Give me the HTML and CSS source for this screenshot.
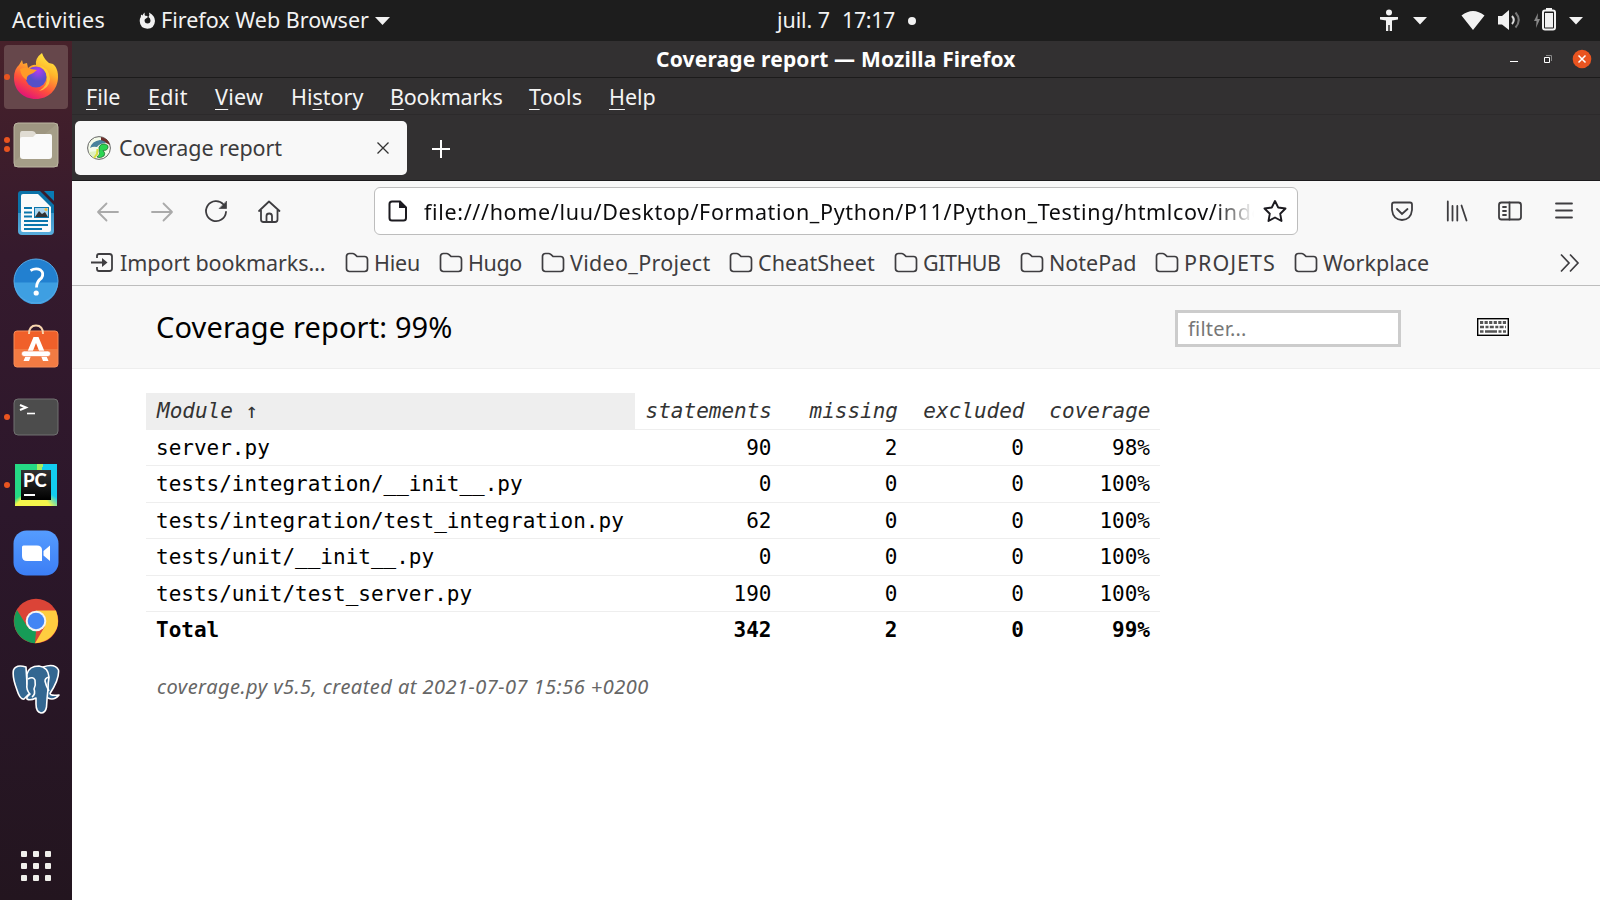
FILE: index.html
```html
<!DOCTYPE html>
<html lang="en">
<head>
<meta charset="utf-8">
<title>Coverage report</title>
<link rel="stylesheet" href="styles.css">
</head>
<body>
<svg class="defs" width="0" height="0">
  <symbol id="folder" viewBox="0 0 24 22"><path d="M1.5 4.500Q1.500 1.500 4.500 1.500H7.500Q8.800 1.500 9.800 2.500L12 4.500H19.500Q22.500 4.500 22.500 7.500V16.500Q22.500 19.500 19.500 19.500H4.500Q1.500 19.500 1.500 16.500Z" fill="none" stroke="#3e3d40" stroke-width="1.700"/></symbol>
</svg>
<header class="topbar">
  <span class="activities">Activities</span>
  <svg class="fxmini" width="17" height="18" viewBox="0 0 17 18"><path d="M6 .5Q5 2 6 3.800Q8 3.300 9 5L7 6.600Q5.500 7 5.500 9Q6 11.500 8.500 11.500Q11.500 11.300 11.500 8.500Q11.500 6 9.500 5Q11 3 10 .5Q16 3.500 16 9Q15.500 16.500 8.300 16.700Q1 16.300 .7 9Q.6 6.500 1.800 5L2 2.500L3.500 3.500Q4 1.500 6 .5Z" fill="#f2f2f2"/></svg>
  <span class="app">Firefox Web Browser</span>
  <svg class="caret c1" width="15" height="8"><path d="M0 0H15L7.500 8Z"/></svg>
  <span class="date">juil. 7</span><span class="time">17:17</span><i class="notif"></i>
  <svg class="status" width="210" height="41" viewBox="1380 0 210 41" fill="#f2f2f2"><circle cx="1389" cy="12.500" r="3"/><path d="M1380 17H1398V19.500L1392 20.500V31H1389.700V25H1388.300V31H1386V20.500L1380 19.500ZM1413 17H1427L1420 24.500ZM1461.500 15.500Q1473 6.500 1484.500 15.500L1473 30ZM1498 16H1502L1509 10V30L1502 24.500H1498ZM1569 17H1583L1576 24.500Z"/><path d="M1512 16Q1515.500 20 1512 24" fill="none" stroke="#ddd" stroke-width="2"/><path d="M1515.500 12.500Q1522 20 1515.500 27.500" fill="none" stroke="#777" stroke-width="2"/><path d="M1538 13L1534 21H1536.500L1536 28L1540 19H1537.500Z" fill="#888"/><rect x="1543" y="10.500" width="12" height="19" rx="2" fill="none" stroke="#f2f2f2" stroke-width="2"/><path d="M1546 8H1552V10H1546ZM1545 13H1553V27.500H1545Z"/></svg>
</header>
<div class="desk">
<nav class="dock">
  <div class="slot s-fx on"><svg width="46" height="48" viewBox="0 0 46 48"><defs><linearGradient id="ff" x1=".8" y1="0" x2=".3" y2="1"><stop offset="0" stop-color="#fff044"/><stop offset=".35" stop-color="#ffb52b"/><stop offset=".7" stop-color="#ff4f3c"/><stop offset="1" stop-color="#e0107b"/></linearGradient><radialGradient id="fp" cx=".6" cy=".2"><stop offset="0" stop-color="#b43bf0"/><stop offset="1" stop-color="#5650c8"/></radialGradient></defs><path d="M9 8L10 12L14 11L15 16Q20 12 23 13Q22 6 29 1Q31 7 36 11L40 12L42 14Q45 18 45 25C45 38 35 47 23 47C10 47 1 38 1 26Q1 17 6 13Z" fill="url(#ff)"/><circle cx="23" cy="25" r="10.500" fill="url(#fp)"/><path d="M7 17Q13 14 18 17L24 18Q20 22 16 23Q13 25 14 28Q8 25 7 17Z" fill="#ff9b27"/><path d="M25 13Q36 15 37 27Q36 37 26 39Q35 34 34 25Q33 17 25 13Z" fill="#ffd23a" opacity=".8"/></svg></div>
  <div class="slot s-files two"><svg width="46" height="46" viewBox="0 0 46 46"><rect x="1" y="1" width="44" height="44" rx="4" fill="#9e9681"/><path d="M20 22L45 1V45H1V40Z" fill="#aaa38d" opacity=".6"/><rect x="1" y="1" width="44" height="44" rx="4" fill="none" stroke="#bcb6a2"/><path d="M7 12Q7 9 9 9H19Q22 9 23 12V18H7Z" fill="#e0dcd3"/><path d="M7 17Q7 15 9 15H20L23 12H37Q39 12 39 14V34Q39 37 36 37H10Q7 37 7 34Z" fill="#fafafa"/></svg></div>
  <div class="slot s-writer"><svg width="38" height="46" viewBox="0 0 38 46"><defs><linearGradient id="wr" x2="0" y2="1"><stop offset=".5" stop-color="#0b72a8"/><stop offset=".5" stop-color="#3a95c8"/><stop offset="1" stop-color="#58addd"/></linearGradient></defs><path d="M4 1H23L37 15V41Q37 45 33 45H5Q1 45 1 41V4Q1 1 4 1Z" fill="url(#wr)"/><path d="M4 6Q4 4 6 4H21L34 17V40Q34 42 32 42H6Q4 42 4 40Z" fill="#fafafa"/><path d="M27 1H37V11Z" fill="#087bb4"/><path d="M7 18H15M7 22.500H15M7 26.500H15M7 31H31M7 35H31M7 39H25" stroke="#0b76ac" stroke-width="2"/><rect x="17.500" y="17.500" width="14" height="10" fill="#a9d4ee" stroke="#0b76ac"/><path d="M18 27L22 21L25 24L28 22L31 27Z" fill="#333"/><circle cx="29" cy="19.500" r="1.500" fill="#f3bb3c"/></svg></div>
  <div class="slot s-help"><svg width="46" height="46" viewBox="0 0 46 46"><circle cx="23" cy="23" r="22" fill="#2280d0"/><path d="M1 24.500H45A22 22 0 0 1 1 24.500" fill="#3e9fe2"/><circle cx="23" cy="23" r="22" fill="none" stroke="#55a9e6"/><path d="M17.500 12.500Q23 9.500 27.500 12Q31.500 15 28.500 20Q23.500 23.500 23.500 29.500" fill="none" stroke="#fff" stroke-width="2.800"/><circle cx="23.200" cy="35" r="2.600" fill="#fff"/></svg></div>
  <div class="slot s-soft"><svg width="46" height="44" viewBox="0 0 46 44"><rect x="1" y="7" width="44" height="36" rx="3" fill="#f0602a"/><path d="M1 25H45V40Q45 43 42 43H4Q1 43 1 40Z" fill="#f27b43"/><rect x="1" y="7" width="44" height="36" rx="3" fill="none" stroke="#f58b58"/><path d="M16 10Q16 1.500 23 1.500T30 10" fill="none" stroke="#f7d5ae" stroke-width="2"/><path d="M20.500 13H25.500L35.500 37H30L23 19L16 37H10.500Z" fill="#fff"/><rect x="8.500" y="27" width="29" height="5.500" rx="2.700" fill="#fff" stroke="#f0703a" stroke-width=".6"/></svg></div>
  <div class="slot s-term one"><svg width="46" height="38" viewBox="0 0 46 38"><rect x="1" y="1" width="44" height="36" rx="4" fill="#4c4c4c" stroke="#707070"/><path d="M7 7L13 9.500L7 12" fill="none" stroke="#fff" stroke-width="2"/><path d="M14 15.500H22" stroke="#fff" stroke-width="1.600"/></svg></div>
  <div class="slot s-py one"><div class="pycharm"><b>PC</b></div></div>
  <div class="slot s-zoom"><svg width="46" height="46" viewBox="0 0 46 46"><defs><linearGradient id="zm" x2="0" y2="1"><stop stop-color="#559cff"/><stop offset="1" stop-color="#3c7ef5"/></linearGradient></defs><rect x=".5" y=".5" width="45" height="45" rx="13" fill="url(#zm)"/><path d="M9 17Q9 15.500 10.500 15.500H24Q29 15.500 29 20V31H14Q9 31 9 26ZM30.500 21L37 15.500V31L30.500 25.500Z" fill="#fff"/></svg></div>
  <div class="slot s-chrome"><svg width="46" height="46" viewBox="0 0 46 46"><circle cx="23" cy="23" r="22.300" fill="#db4437"/><path d="M4 12L14.500 29L23 33L22 45.300A22.300 22.300 0 0 1 4 12Z" fill="#169c57"/><path d="M23 12.500H43Q46.500 22 44 30Q38 44 22 45.300L31.500 29Z" fill="#ffcd40"/><circle cx="23" cy="23" r="10.300" fill="#f4f4f4"/><circle cx="23" cy="23" r="8.300" fill="#4285f4"/></svg></div>
  <div class="slot s-pg"><svg width="48" height="50" viewBox="0 0 48 50"><g fill="#336791" stroke="#fff" stroke-width="1.600" stroke-linejoin="round"><path d="M14 3Q4 0 1.500 6Q0 13 5 26Q8 36 12 35L18 29L15 20Z"/><path d="M31 3Q43 -1 46.500 6Q47.500 15 38 29.500Q38 32 47 31Q42 37 36 34L31 28Z"/><path d="M15 10Q17 2 27 2Q36 3 37 13Q36 19 36 25Q35 34 34.500 43Q33.500 49 29 49Q24 48 24 40V34Q18 37 15 35Q14 33 18 30Q14 26 15 20Z"/><path d="M16 15Q21 12 23 16Q24 21 22 25Q24 30 20 33M37 13Q33 14 33 17Q34 22 37 27" fill="none"/></g></svg></div>
  <div class="grid9"><i></i><i></i><i></i><i></i><i></i><i></i><i></i><i></i><i></i></div>
</nav>
<main class="window">
  <div class="title"><b>Coverage report — Mozilla Firefox</b>
    <svg class="wm" width="84" height="20" viewBox="1508 49 84 20"><path d="M1510 61.500H1518" stroke="#fff"/><path d="M1544.500 57.500H1549.500V62.500H1544.500Z" fill="none" stroke="#fff"/><path d="M1546 55.500H1551.500V61" fill="none" stroke="#888"/><circle cx="1582" cy="59" r="9.300" fill="#e95420"/><path d="M1578.500 55.500L1585.500 62.500M1585.500 55.500L1578.500 62.500" stroke="#fff" stroke-width="1.500"/></svg>
  </div>
  <div class="menu"><span class="m1"><u>F</u>ile</span><span class="m2"><u>E</u>dit</span><span class="m3"><u>V</u>iew</span><span class="m4">Hi<u>s</u>tory</span><span class="m5"><u>B</u>ookmarks</span><span class="m6"><u>T</u>ools</span><span class="m7"><u>H</u>elp</span></div>
  <div class="tabs">
    <div class="tab"><svg width="24" height="24" viewBox="0 0 24 24"><circle cx="12" cy="12" r="11.400" fill="#f4faea" stroke="#666"/><path d="M14 1Q21 2 23 9Q18 6 14 5Z" fill="#6d302c"/><path d="M3 12Q5 5 13 4Q18 5 19 7Q13 7 10 11Q6 10 3 12Z" fill="#48829c"/><path d="M2 16L10 15L8 22Q3 20 2 16Z" fill="#dff0c2"/><path d="M12 11Q14 7 18 8Q22 9 21 12Q20 15 16 14.500Q19 17 17 20Q13 23 10 21Q14 18 12 15Z" fill="#2bd552" stroke="#23652e" stroke-width=".7"/><path d="M10.500 13L10 18L7 22" fill="none" stroke="#d9df3d" stroke-width="2"/></svg><span>Coverage report</span><svg class="x" width="12" height="12"><path d="M.5 .5L11.500 11.500M11.500 .5L.5 11.500" stroke="#333" stroke-width="1.300"/></svg></div>
    <svg class="plus" width="18" height="18"><path d="M9 0V18M0 9H18" stroke="#fff" stroke-width="2"/></svg>
  </div>
  <div class="nav">
    <svg class="navicons" width="200" height="54" viewBox="90 181 200 54" fill="none" stroke="#3e3d40" stroke-width="1.800" stroke-linejoin="round" stroke-linecap="round"><g stroke="#aaa"><path d="M118 212H98M106.500 203.500L98 212L106.500 220.500M152 212H172M163.500 203.500L172 212L163.500 220.500"/></g><path d="M223.500 204.500A10 10 0 1 0 226 212"/><path d="M226.500 201.500V208.500H219.500Z" fill="#3e3d40" stroke-width=".7"/><path d="M259 211L269 201.500L279.500 211M261 210V219.500Q261 222 263.500 222H275Q277.500 222 277.500 219.500V210M266.500 222V216Q266.500 213.500 269.200 213.500T272 216V222"/></svg>
    <div class="url"><svg width="20" height="22" viewBox="0 0 20 22"><path d="M4 1.500H12L18 7.500V18Q18 20.500 15.500 20.500H4Q1.500 20.500 1.500 18V4Q1.500 1.500 4 1.500Z" fill="none" stroke="#1c1b20" stroke-width="2"/><path d="M11 1.500L18 8H11Z" fill="#1c1b20"/></svg><span>file:///home/luu/Desktop/Formation_Python/P11/Python_Testing/htmlcov/inde</span><svg class="star" width="26" height="25" viewBox="0 0 26 25"><path d="M13 2L16.200 8.500L23.500 9.500L18.200 14.700L19.500 22L13 18.500L6.500 22L7.800 14.700L2.500 9.500L9.800 8.500Z" fill="none" stroke="#1c1b20" stroke-width="1.900" stroke-linejoin="round"/></svg></div>
    <svg class="tools" width="186" height="26" viewBox="1390 198 186 26" fill="none" stroke="#3e3d40" stroke-width="1.800" stroke-linecap="round"><path d="M1394 202.500H1410Q1412 202.500 1412 204.500V210Q1411 219.500 1402 220Q1393 219.500 1392 210V204.500Q1392 202.500 1394 202.500ZM1397 209L1402 214L1407.500 209"/><path d="M1447.800 201.500V220.500M1452.500 206V220.500M1457.300 206V220.500M1461.500 205.500L1466.500 220.500"/><rect x="1499" y="202.500" width="22" height="17" rx="2.500"/><path d="M1509.500 202.500V219.500M1503 207H1506M1503 211H1506M1503 215H1506M1556 203.500H1572M1556 210.500H1572M1556 217.500H1572" stroke-width="1.800"/></svg>
  </div>
  <div class="bookmarks">
    <svg class="imp" width="24" height="22" viewBox="0 0 24 22"><path d="M6 6V4Q6 2 8 2H18.500Q21 2 21 4.500V16.500Q21 19 18.500 19H8Q6 19 6 17V15M0 10.500H14" fill="none" stroke="#3e3d40" stroke-width="1.800"/><path d="M11 6L16.500 10.500L11 15Z" fill="#3e3d40"/></svg>
    <span class="b0">Import bookmarks…</span>
    <span class="bm b1"><svg><use href="#folder"/></svg>Hieu</span><span class="bm b2"><svg><use href="#folder"/></svg>Hugo</span><span class="bm b3"><svg><use href="#folder"/></svg>Video_Project</span><span class="bm b4"><svg><use href="#folder"/></svg>CheatSheet</span><span class="bm b5"><svg><use href="#folder"/></svg>GITHUB</span><span class="bm b6"><svg><use href="#folder"/></svg>NotePad</span><span class="bm b7"><svg><use href="#folder"/></svg>PROJETS</span><span class="bm b8"><svg><use href="#folder"/></svg>Workplace</span>
    <svg class="more" width="20" height="20"><path d="M1 1.500L9 10L1 18.500M10 1.500L18 10L10 18.500" fill="none" stroke="#3e3d40" stroke-width="1.700"/></svg>
  </div>
  <div class="report-head"><h1>Coverage report: 99%</h1><div class="filter">filter...</div>
    <svg class="kbd" width="32" height="18" viewBox="0 0 32 18"><rect x=".7" y=".7" width="30.600" height="16.600" fill="#fff" stroke="#000" stroke-width="1.400"/><path d="M3 4.500H29" stroke="#555" stroke-width="3" stroke-dasharray="3.200 1.360"/><path d="M3 9H29" stroke="#555" stroke-width="2.600" stroke-dasharray="4 1.500 3 1.300"/><path d="M3 13.500H6.500M8 13.500H20M21.500 13.500H24.500M26 13.500H29" stroke="#555" stroke-width="2.700"/></svg>
  </div>
  <table>
    <colgroup><col class="k1"><col class="k2"><col class="k3"><col class="k4"><col class="k3"></colgroup>
    <tr class="th"><th>Module ↑</th><th>statements</th><th>missing</th><th>excluded</th><th>coverage</th></tr>
    <tr class="odd"><td>server.py</td><td>90</td><td>2</td><td>0</td><td>98%</td></tr>
    <tr><td>tests/integration/__init__.py</td><td>0</td><td>0</td><td>0</td><td>100%</td></tr>
    <tr class="odd"><td>tests/integration/test_integration.py</td><td>62</td><td>0</td><td>0</td><td>100%</td></tr>
    <tr><td>tests/unit/__init__.py</td><td>0</td><td>0</td><td>0</td><td>100%</td></tr>
    <tr class="odd"><td>tests/unit/test_server.py</td><td>190</td><td>0</td><td>0</td><td>100%</td></tr>
    <tr class="total"><td>Total</td><td>342</td><td>2</td><td>0</td><td>99%</td></tr>
  </table>
  <p class="foot">coverage.py v5.5, created at 2021-07-07 15:56 +0200</p>
</main>
</div>
</body>
</html>
```
FILE: styles.css
```css
* { box-sizing: border-box; }
body { margin: 0; width: 1600px; height: 900px; overflow: hidden; background: #fff; font: 21.5px/30px "Noto Sans", sans-serif; }
svg { display: block; flex: none; }
.defs { position: absolute; }
span, b, h1 { white-space: nowrap; }
.topbar { height: 41px; background: #1d1d1d; color: #f2f2f2; display: flex; align-items: center; }
.topbar span { flex: none; padding-bottom: 2px; }
.topbar .activities { width: 127px; padding-left: 12px; letter-spacing: .35px; }
.fxmini { margin: 0 5px 0 12px; }
.app { width: 214px; }
.caret { fill: #f2f2f2; }
.date { margin-left: 387px; width: 65px; letter-spacing: -.1px; }
.time { width: 66px; letter-spacing: -.4px; }
.notif { width: 8px; height: 8px; border-radius: 50%; background: #f2f2f2; }
.status { margin-left: auto; margin-right: 10px; }
.desk { display: flex; height: 859px; }
.dock { width: 72px; flex: none; position: relative; padding-top: 4px; background: linear-gradient(#47212a, #351a2d 25%, #2c172b 55%, #23151f); }
.slot { height: 68px; display: flex; align-items: center; justify-content: center; position: relative; }
.slot.on { width: 64px; height: 64px; margin: 0 4px 2px; padding-bottom: 3px; border-radius: 4px; background: #66474b; }
.s-soft { padding-bottom: 6px; }
.slot.on::before, .one::before, .two::before, .two::after { content: ""; position: absolute; left: 4px; top: 31px; width: 6px; height: 6px; border-radius: 50%; background: #e95420; }
.slot.on::before { left: 0; top: 29px; }
.two::before { top: 26px; }
.two::after { top: 35px; }
.pycharm { width: 42px; height: 42px; padding: 6px; background: conic-gradient(from 20deg, #12cdf0 0 28%, #f4f64b 35% 57%, #25d985 60% 95%, #a5ed62 95%); }
.pycharm b { display: block; width: 30px; height: 30px; background: linear-gradient(#333, #000); color: #fff; font: 900 18.5px/21px Lato, sans-serif; padding-left: 2px; position: relative; }
.pycharm b::after { content: ""; position: absolute; left: 3px; top: 24px; width: 11px; height: 2px; background: #fff; }
.grid9 { position: absolute; left: 21px; bottom: 19px; display: grid; grid-template-columns: repeat(3, 6px); gap: 6px; }
.grid9 i { height: 6px; border-radius: 1px; background: #f0efeb; }
.window { flex: 1; min-width: 0; }
.title { height: 37px; background: #323031; border-bottom: 1px solid #1c1b1b; color: #fff; display: flex; align-items: center; }
.title b { margin-left: 584px; width: 362px; font-size: 21px; letter-spacing: .17px; }
.wm { margin-left: auto; margin-right: 8px; }
.menu { height: 37px; background: #323031; border-bottom: 1px solid #2c2a2b; color: #f4f4f4; display: flex; padding-left: 14px; }
.menu span { line-height: 38px; }
.menu u { text-underline-offset: 4px; text-decoration-thickness: 1px; }
.m1 { width: 62px; } .m2 { width: 67px; letter-spacing: .3px; } .m3 { width: 76px; letter-spacing: .3px; } .m4 { width: 99px; } .m5 { width: 139px; letter-spacing: -.2px; } .m6 { width: 80px; letter-spacing: .2px; }
.tabs { height: 66px; background: #323031; border-bottom: 1px solid #1c1b1d; display: flex; padding: 6px 0 0 3px; }
.tab { width: 332px; height: 54px; background: #f8f8f8; border-radius: 5px; display: flex; align-items: center; padding: 0 18px 0 12px; color: #3c3b3d; }
.tab span { margin-left: 8px; letter-spacing: -.07px; }
.x { margin-left: auto; }
.plus { margin: 19px 0 0 25px; }
.nav { height: 57px; background: #f8f8f8; display: flex; }
.navicons { margin-left: 18px; }
.url { margin: 6px 0 0 84px; width: 924px; height: 48px; border: 1px solid #bdbdbd; border-radius: 6px; background: #fff; display: flex; align-items: center; padding-left: 13px; color: #0c0c0d; }
.url span { margin-left: 16px; width: 830px; padding-top: 1px; letter-spacing: .66px; mask-image: linear-gradient(90deg, #000 790px, transparent 830px); -webkit-mask-image: linear-gradient(90deg, #000 790px, transparent 830px); }
.star { margin-left: 8px; }
.tools { margin: 17px 0 0 92px; }
.bookmarks { height: 48px; background: #f8f8f8; border-bottom: 1px solid #bdbdbd; display: flex; align-items: center; padding: 3px 20px 0 19px; color: #3e3d40; }
.imp { margin-right: 5px; }
.b0 { width: 225px; letter-spacing: -.06px; }
.bm { display: flex; align-items: center; gap: 5px; flex: none; }
.bm svg { width: 24px; height: 22px; }
.b1 { width: 94px; letter-spacing: -.2px; } .b2 { width: 102px; letter-spacing: -.4px; } .b3 { width: 188px; letter-spacing: .3px; } .b4 { width: 165px; letter-spacing: .1px; } .b5 { width: 126px; letter-spacing: -.5px; } .b6 { width: 135px; } .b7 { width: 139px; letter-spacing: 1px; }
.more { margin-left: auto; }
.report-head { height: 83px; background: #f8f8f8; border-bottom: 1px solid #eee; display: flex; align-items: center; padding-left: 84px; }
h1 { margin: 0; width: 1019px; font-size: 29px; font-weight: 400; line-height: 40px; color: #000; letter-spacing: .13px; }
.filter { width: 226px; height: 37px; margin-top: 2px; border: 3px solid #ccc; background: #fff; color: #777; font-size: 20px; line-height: 31px; padding-left: 10px; letter-spacing: .2px; }
.kbd { margin-left: 76px; }
table { margin: 24px 0 0 74px; width: 1013.5px; table-layout: fixed; border-collapse: separate; border-spacing: 0; font: 21px/24px "DejaVu Sans Mono", monospace; }
.k1 { width: 489px; } .k2 { width: 146px; } .k3 { width: 126px; } .k4 { width: 126.500px; }
td, th { height: 36px; padding: 0 9.5px 0 0; text-align: right; white-space: nowrap; border-bottom: 1px solid #eee; }
th { height: 37px; padding-right: 9px; font-weight: 400; font-style: italic; color: #333; }
.odd td { height: 36px; }
tr:nth-child(3) td, tr:nth-child(5) td { height: 37px; }
td:first-child, th:first-child { text-align: left; padding-left: 10px; padding-right: 0; }
th:first-child { background: #eee; border-color: #eee; padding-left: 11px; }
.total td { font-weight: 700; border: 0; }
.foot { margin: 24px 0 0 85px; font-style: italic; font-size: 20px; letter-spacing: .47px; color: #666; }
```
